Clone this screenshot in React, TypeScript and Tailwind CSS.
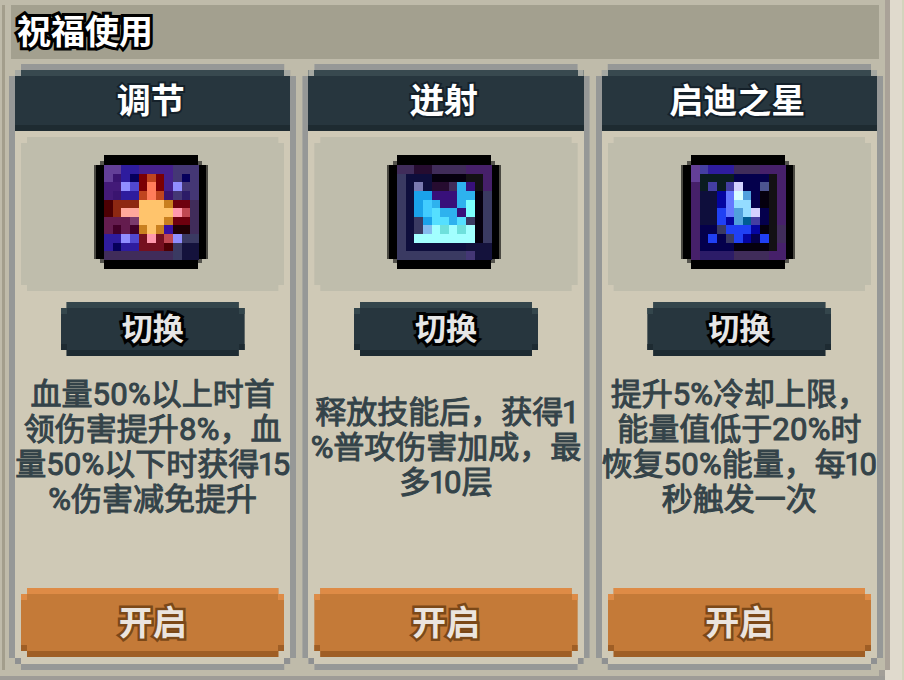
import React from 'react';

interface Blessing {
  name: string;
  lines: string[];
  icon: string[];
}

const PALETTE: Record<string, string> = {
  // violet and navy
  a: '#633f98', b: '#2e1c9e', c: '#45208c', d: '#443775', e: '#3a1470', f: '#06005c',
  g: '#431a78', h: '#918eff', i: '#5148d0', j: '#2c1c68', k: '#402c5a', l: '#3a3a62',
  m: '#14123c', n: '#641c4e', o: '#420028', p: '#7b3a6c', q: '#3a10a0',
  // fire
  r: '#7a0004', s: '#c0451f', t: '#ff7d5a', u: '#4d0003', v: '#8d2812', w: '#ffa89c',
  x: '#ffc46c', y: '#c98020', z: '#6e000e', A: '#c04852', B: '#200004', C: '#ff98ac', D: '#75101f',
  // ice
  E: '#0e0e3c', F: '#05000e', G: '#131114', H: '#46206a', I: '#7a7ab0', J: '#260c30',
  K: '#2eb2ee', L: '#1aa2ea', M: '#38107a', N: '#42ccff', O: '#7cffff', P: '#55dfff',
  Q: '#84bcee', R: '#a2ffff', S: '#6ee0dc',
  // star
  T: '#0a1c20', U: '#04004c', V: '#d4d2ff', W: '#0404a0', X: '#6478ff', Y: '#d8ffff',
  Z: '#50a0dc', 1: '#94dcff', 2: '#2040f4', 3: '#005c94', 5: '#4c5490', 6: '#443ea2',
};

const BLESSINGS: Blessing[] = [
  {
    name: '调节',
    lines: ['血量50%以上时首', '领伤害提升8%，血', '量50%以下时获得15', '%伤害减免提升'],
    icon: [
      'aabbccccddd',
      'aebfrsrcdfd',
      'gghirtrchdd',
      'gebbstsedjd',
      'uvvvxxxyzzk',
      'uvwwxxxxCAk',
      'nnnpxxxyzzk',
      'nonoyxyqBBk',
      'bbhiDCDAhll',
      'bfbbDDDulmm',
      'kkkkkkkklmm',
    ],
  },
  {
    name: '迸射',
    lines: ['释放技能后，获得1', '%普攻伤害加成，最', '多10层'],
    icon: [
      'kkJJkkkkHHH',
      'lEEEFFFFGGH',
      'lEIEJJkKMGH',
      'lELLMMMKKFl',
      'lELNKMMKOFl',
      'lELNPKKMOFl',
      'lElLPPKPlFl',
      'lElQRSRSRFl',
      'lERRRRRRRFl',
      'lEEEEEEEmmm',
      'lllllllldmm',
    ],
  },
  {
    name: '启迪之星',
    lines: ['提升5%冷却上限，', '能量值低于20%时', '恢复50%能量，每10', '秒触发一次'],
    icon: [
      'a6bbbkkkHHH',
      'aTTTTUUUUGH',
      'HT6T6VUU5GH',
      'HEEWXYZUFGH',
      'HEEWX11UFGH',
      'HEE2XZ1VUGH',
      'HEE2WZ36UGH',
      'HUUl222WFGk',
      'HU2Ul2WU2Gk',
      'HUUUUFFFFGH',
      'HjjjjkkkkHH',
    ],
  },
];

const BlessingIcon: React.FC<{ rows: string[] }> = ({ rows }) => (
  <svg viewBox="0 0 114 114" className="w-[114px] h-[114px]" shapeRendering="crispEdges" aria-hidden="true">
    <rect x="6" y="6" width="102" height="102" fill="#55544d" />
    <rect x="10" y="0" width="94" height="114" fill="#000" />
    <rect x="0" y="10" width="114" height="94" fill="#000" />
    <rect x="0" y="10" width="2" height="94" fill="#4a4942" />
    <rect x="112" y="10" width="2" height="94" fill="#4a4942" />
    {rows.map((row, r) =>
      row.split('').map((key, c) => {
        const x = Math.round(10 + (c * 95) / 11);
        const y = Math.round(10 + (r * 95) / 11);
        return <rect key={`${r}-${c}`} x={x} y={y} width={9} height={9} fill={PALETTE[key]} />;
      })
    )}
  </svg>
);

// Four small squares sitting just inside the notched corners of a box
const Corners: React.FC<{ top: string; bottom: string }> = ({ top, bottom }) => (
  <>
    <span className={`absolute left-0 top-0 size-1.5 ${top}`} />
    <span className={`absolute right-0 top-0 size-1.5 ${top}`} />
    <span className={`absolute left-0 bottom-0 size-1.5 ${bottom}`} />
    <span className={`absolute right-0 bottom-0 size-1.5 ${bottom}`} />
  </>
);

const NOTCH =
  '[clip-path:polygon(6px_0,calc(100%-6px)_0,calc(100%-6px)_6px,100%_6px,100%_calc(100%-6px),calc(100%-6px)_calc(100%-6px),calc(100%-6px)_100%,6px_100%,6px_calc(100%-6px),0_calc(100%-6px),0_6px,6px_6px)]';

const STAIRS =
  '[clip-path:polygon(12px_0,calc(100%-12px)_0,calc(100%-12px)_6px,calc(100%-6px)_6px,calc(100%-6px)_12px,100%_12px,100%_calc(100%-12px),calc(100%-6px)_calc(100%-12px),calc(100%-6px)_calc(100%-6px),calc(100%-12px)_calc(100%-6px),calc(100%-12px)_100%,12px_100%,12px_calc(100%-6px),6px_calc(100%-6px),6px_calc(100%-12px),0_calc(100%-12px),0_12px,6px_12px,6px_6px,12px_6px)]';

const BlessingCard: React.FC<{ blessing: Blessing }> = ({ blessing }) => (
  <article className={`relative flex flex-col border-6 border-[#969897] bg-[#cfc9b6] ${STAIRS}`}>
    <Corners top="bg-[#a5a8a2]" bottom="bg-[#8f9192]" />
    <h2 className="border-t-6 border-b-6 border-t-[#38494f] border-b-[#1e2b31] bg-[#27363e] h-[61px] pr-1 flex items-center justify-center text-[34px] leading-none font-bold text-white [-webkit-text-stroke:4px_#15212a] [paint-order:stroke_fill]">
      {blessing.name}
    </h2>
    <div className="flex-1 flex flex-col p-1.5 pb-[7px]">
      <div className={`h-[154px] pr-[3px] pb-1 bg-[#bfbdac] flex items-center justify-center ${NOTCH}`}>
        <BlessingIcon rows={blessing.icon} />
      </div>
      <button
        type="button"
        className={`relative mt-[11px] self-center w-[184px] h-[54px] border-t-6 border-b-6 border-t-[#34464c] border-b-[#1e2b32] bg-[#27363e] flex items-center justify-center text-[31px] leading-none font-bold text-[#e6e6e6] [-webkit-text-stroke:6px_#000] [paint-order:stroke_fill] ${NOTCH}`}
      >
        <Corners top="bg-[#34464c]" bottom="bg-[#1e2b32]" />
        切换
      </button>
      <p className="h-[182px] flex flex-col items-center justify-center text-[31px] leading-[35px] proportional-nums text-[#344349] whitespace-nowrap [-webkit-text-stroke:1px_#344349]">
        {blessing.lines.map((line) => (
          <span key={line}>{line}</span>
        ))}
      </p>
      <button
        type="button"
        className={`relative mt-auto h-[69px] border-t-6 border-b-6 border-t-[#de8b46] border-b-[#9f5e25] bg-[#c47a38] text-[34px] leading-none font-bold text-[#ebe4de] [-webkit-text-stroke:5px_#7b4818] [paint-order:stroke_fill] ${NOTCH}`}
      >
        <Corners top="bg-[#de8b46]" bottom="bg-[#9f5e25]" />
        开启
      </button>
    </div>
  </article>
);

export default function App() {
  return (
    <div className="min-h-screen flex bg-[#e0dacd] border-r-2 border-r-[#d3d4bd] pr-3 font-[Roboto,'Noto_Sans_CJK_SC',sans-serif]">
      <main className="relative flex-1 flex flex-col bg-[#bfbbaa] border-b-4 border-b-[#9e9c97] pt-[5px]">
        <span className="absolute left-0.5 top-[5px] bottom-1.5 w-[3px] bg-[#a39e8c]" />
        <span className="absolute right-0 top-0 bottom-1.5 w-[5px] bg-[#aaa298]" />
        <span className="absolute right-[5px] bottom-0 size-1.5 bg-[#a39f98]" />
        <span className="absolute right-0 bottom-0 w-[5px] h-1.5 bg-[#e0dacd]" />
        <span className="absolute right-0 -bottom-1 w-[5px] h-1 bg-[#e0dacd]" />
        <h1 className="ml-[11px] mr-[11px] h-[54px] pl-1.5 bg-[#a3a08f] flex items-center text-[34px] leading-none font-bold text-white [-webkit-text-stroke:6px_#000] [paint-order:stroke_fill]">
          祝福使用
        </h1>
        <section className="flex-1 grid grid-cols-3 gap-1.5 mt-[5px] mb-1.5 ml-[9px] mr-[7px]">
          {BLESSINGS.map((blessing) => (
            <BlessingCard key={blessing.name} blessing={blessing} />
          ))}
        </section>
      </main>
    </div>
  );
}
